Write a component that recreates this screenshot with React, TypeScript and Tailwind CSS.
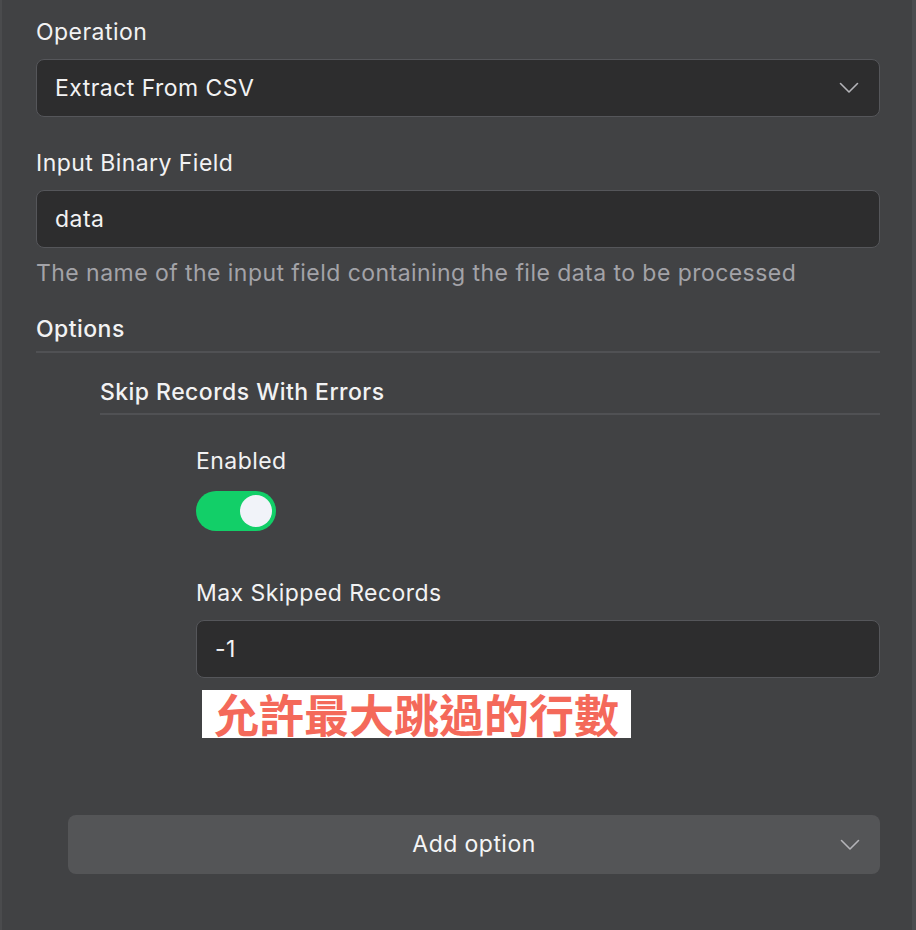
import { useState } from 'react';

function Chevron() {
  return (
    <svg width="20" height="12" viewBox="0 0 20 12" fill="none" className="shrink-0">
      <path d="M1.5 1.5 L10 10 L18.5 1.5" stroke="#b4b4b8" strokeWidth="1.6" strokeLinecap="round" strokeLinejoin="round" />
    </svg>
  );
}

function Label({ children }: { children: React.ReactNode }) {
  return <div className="text-[23px] leading-[28px] text-[#f2f2f3] tracking-[0.45px]">{children}</div>;
}

function TextBox({ value }: { value: string }) {
  return (
    <div className="h-[58px] rounded-lg border border-[#55565a] bg-[#2d2d2e] px-[18px] flex items-center text-[23px] tracking-[0.45px] text-[#f2f2f3]">
      {value}
    </div>
  );
}

export default function App() {
  const [enabled, setEnabled] = useState(true);

  return (
    <div
      className="w-[916px] h-[930px] bg-[#414244] overflow-hidden border-l-2 border-l-[#4a4b4d] border-r-4 border-r-[#4b4c4f]"
      style={{ fontFamily: 'Inter, "Noto Sans", sans-serif' }}
    >
      <div className="pl-[34px] pr-[32px] pt-[18px]">
        <Label>Operation</Label>
        <div className="mt-[13px] h-[58px] rounded-lg border border-[#55565a] bg-[#2d2d2e] pl-[18px] pr-[20px] flex items-center justify-between text-[23px] tracking-[0.45px] text-[#f2f2f3]">
          <span>Extract From CSV</span>
          <Chevron />
        </div>

        <div className="mt-[32px]">
          <Label>Input Binary Field</Label>
        </div>
        <div className="mt-[13px]">
          <TextBox value="data" />
        </div>
        <div className="mt-[11px] text-[23px] leading-[28px] tracking-[0.45px] text-[#a3a3a8]">
          The name of the input field containing the file data to be processed
        </div>

        <div className="mt-[28px] text-[23px] leading-[28px] tracking-[0.45px] font-medium text-[#f2f2f3]">Options</div>
        <div className="mt-[8px] h-[2px] bg-[#505154]" />

        <div className="ml-[64px]">
          <div className="mt-[25px] text-[23px] leading-[28px] tracking-[0.45px] font-medium text-[#f2f2f3]">Skip Records With Errors</div>
          <div className="mt-[7px] h-[2px] bg-[#505154]" />

          <div className="ml-[96px]">
            <div className="mt-[32px]">
              <Label>Enabled</Label>
            </div>
            <button
              onClick={() => setEnabled(!enabled)}
              className={`mt-[16px] w-[80px] h-[40px] rounded-full flex items-center px-[4px] ${enabled ? 'bg-[#12cf68] justify-end' : 'bg-[#6b6c70] justify-start'}`}
            >
              <span className="w-[32px] h-[32px] rounded-full bg-[#f1f3f9]" />
            </button>

            <div className="mt-[48px]">
              <Label>Max Skipped Records</Label>
            </div>
            <div className="mt-[13px]">
              <TextBox value="-1" />
            </div>

            <div className="mt-[12px] ml-[6px] inline-flex items-center bg-white h-[48px] pl-[12px] pr-[12px]">
              <span
                className="text-[45px] leading-[48px] font-bold text-[#f4695a]"
                style={{ fontFamily: '"Noto Sans CJK TC", "Noto Sans CJK SC", sans-serif' }}
              >
                允許最大跳過的行數
              </span>
            </div>
          </div>
        </div>

        <div className="mt-[76px] ml-[32px] h-[59px] rounded-lg bg-[#545557] relative flex items-center justify-center text-[23px] tracking-[0.45px] text-[#f5f5f6]">
          <span>Add option</span>
          <span className="absolute right-[20px] top-1/2 -translate-y-1/2 flex">
            <Chevron />
          </span>
        </div>
      </div>
    </div>
  );
}
